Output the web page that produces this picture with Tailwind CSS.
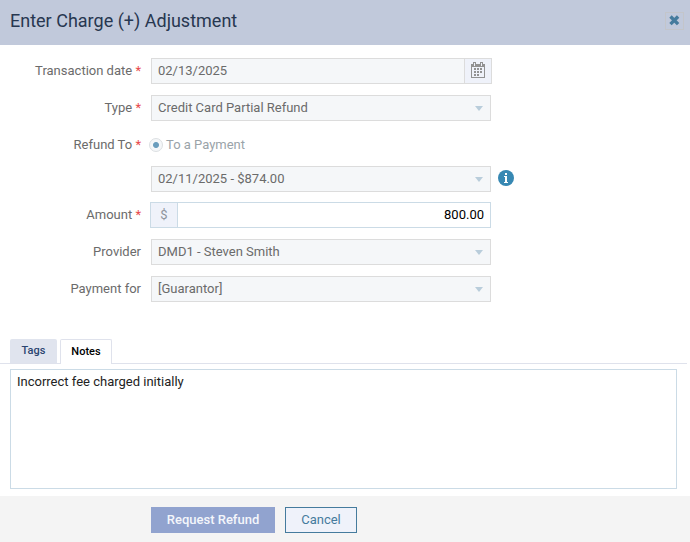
<!DOCTYPE html>
<html lang="en">

<head>
  <meta charset="UTF-8">
  <meta name="viewport" content="width=device-width, initial-scale=1.0">
  <title>Enter Charge (+) Adjustment</title>
  <script src="https://cdn.jsdelivr.net/npm/@tailwindcss/browser@4"></script>
</head>

<body class="bg-white font-[Roboto,sans-serif] text-[13px] text-[#6b6b6b]">
  <form class="flex min-h-screen flex-col">

    <!-- Header -->
    <header class="flex h-[45px] items-center justify-between bg-[#c1c9db] pl-[10px] pr-[6px]">
      <h1 class="pb-1 text-[18px] leading-6 text-[#273750]">Enter Charge (+) Adjustment</h1>
      <button type="button" aria-label="Close" class="mb-1 flex h-[18px] w-[19px] items-center justify-center border border-[#c3c5ca]">
        <svg class="size-[11px]" viewBox="0 0 11 11" fill="none" stroke="#457b9d" stroke-width="3.4">
          <path d="M1.5 1.5l7.6 7.6M9.1 1.5L1.5 9.1" />
        </svg>
      </button>
    </header>

    <!-- Fields -->
    <div class="grid grid-cols-[141px_minmax(0,1fr)] items-center gap-x-[10px] pt-[13px] pr-4">
      <label for="date" class="mb-[11px] text-right">Transaction date <span class="text-[#e84a4a]">*</span></label>
      <div class="mb-[11px] flex h-[26px] max-w-[341px] border border-[#dcdcdc] bg-[#f5f7f9]">
        <input id="date" type="text" value="02/13/2025" disabled class="min-w-0 flex-1 px-[6px] text-[#6b6b6b]">
        <button type="button" aria-label="Open calendar" disabled class="flex w-[27px] items-start justify-center border-l border-[#dcdcdc] bg-[#eff2fa] pt-[3px]">
          <svg class="h-4 w-[14px]" viewBox="0 0 14 16" fill="#929292" shape-rendering="crispEdges">
            <path fill-rule="evenodd" d="M0 2h2V0h3v2h4V0h3v2h2v14H0zM1 5v10h12V5zM3 1v3h1V1zM10 1v3h1V1z" />
            <path d="M3 6h2v2H3zM6 6h2v2H6zM9 6h2v2H9zM3 9h2v2H3zM6 9h2v2H6zM9 9h2v2H9zM3 12h2v2H3zM6 12h2v2H6z" />
          </svg>
        </button>
      </div>

      <label for="type" class="mb-[11px] text-right">Type <span class="text-[#e84a4a]">*</span></label>
      <div class="relative mb-[11px] max-w-[340px]">
        <select id="type" disabled class="block h-[26px] w-full appearance-none border border-[#dcdcdc] bg-[#f5f7f9] px-[6px] text-[#6b6b6b] opacity-100">
          <option>Credit Card Partial Refund</option>
        </select>
        <svg class="absolute top-[11px] right-2 h-[5px] w-2" viewBox="0 0 8 5" fill="#b9cddb"><path d="M0 0h8L4 5z" /></svg>
      </div>

      <span class="mb-2 text-right">Refund To <span class="text-[#e84a4a]">*</span></span>
      <div class="mb-2 flex h-[26px] items-center gap-[3px] text-[#9aa3a9]">
        <input id="to-payment" type="radio" name="refund-to" checked disabled class="-ml-[2px] size-[14px] appearance-none rounded-full border border-[#dcdfe2] bg-[radial-gradient(circle,#6a9dbd_2.5px,#f5f7f9_3.5px)]">
        <label for="to-payment">To a Payment</label>
      </div>

      <div class="col-start-2 mb-[10px] flex items-center gap-[7px]">
        <div class="relative w-[340px]">
          <select aria-label="Payment" disabled class="block h-[26px] w-full appearance-none border border-[#dcdcdc] bg-[#f5f7f9] px-[6px] text-[#6b6b6b] opacity-100">
            <option>02/11/2025 - $874.00</option>
          </select>
          <svg class="absolute top-[11px] right-2 h-[5px] w-2" viewBox="0 0 8 5" fill="#b9cddb"><path d="M0 0h8L4 5z" /></svg>
        </div>
        <button type="button" aria-label="Payment info" class="mb-[2px]">
          <svg class="size-4" viewBox="0 0 16 16">
            <circle cx="8" cy="8" r="8" fill="#3788b3" />
            <path d="M7 3h2v2H7zM6 6h3v6h1v1H6v-1h1V7H6z" fill="#fff" />
          </svg>
        </button>
      </div>

      <label for="amount" class="mb-[11px] text-right">Amount <span class="text-[#e84a4a]">*</span></label>
      <div class="-ml-px mb-[11px] flex h-[26px] max-w-[341px] border border-[#cbdbe6]">
        <span class="flex w-[27px] items-center justify-center border-r border-[#cbdbe6] bg-[#eff2fa] text-[#8e949c]">$</span>
        <input id="amount" type="text" value="800.00" class="min-w-0 flex-1 bg-white px-[6px] text-right text-black">
      </div>

      <label for="provider" class="mb-[11px] text-right">Provider</label>
      <div class="relative mb-[11px] max-w-[340px]">
        <select id="provider" disabled class="block h-[26px] w-full appearance-none border border-[#dcdcdc] bg-[#f5f7f9] px-[6px] text-[#6b6b6b] opacity-100">
          <option>DMD1 - Steven Smith</option>
        </select>
        <svg class="absolute top-[11px] right-2 h-[5px] w-2" viewBox="0 0 8 5" fill="#b9cddb"><path d="M0 0h8L4 5z" /></svg>
      </div>

      <label for="payment-for" class="text-right">Payment for</label>
      <div class="relative max-w-[340px]">
        <select id="payment-for" disabled class="block h-[26px] w-full appearance-none border border-[#dcdcdc] bg-[#f5f7f9] px-[6px] text-[#6b6b6b] opacity-100">
          <option>[Guarantor]</option>
        </select>
        <svg class="absolute top-[11px] right-2 h-[5px] w-2" viewBox="0 0 8 5" fill="#b9cddb"><path d="M0 0h8L4 5z" /></svg>
      </div>
    </div>

    <!-- Tabs -->
    <div role="tablist" class="mt-[37px] mr-[3px] flex gap-[3px] border-b border-[#dfe2ec] pl-[10px] text-[11px] font-medium">
      <button type="button" role="tab" class="h-6 w-[47px] rounded-t-xs bg-[#e0e4ee] text-[#2b4570]">Tags</button>
      <button type="button" role="tab" aria-selected="true" class="-mb-px h-[25px] w-[52px] rounded-t-xs border border-b-0 border-[#dfe2ec] bg-white text-black">Notes</button>
    </div>
    <div class="mt-[5px] mb-[7px] mr-[13px] ml-[10px] flex flex-1">
      <textarea aria-label="Notes" class="block min-h-[120px] w-full resize-none border border-[#cbdbe6] px-[6px] py-1 leading-4 text-[#222]">Incorrect fee charged initially</textarea>
    </div>

    <!-- Actions -->
    <footer class="flex gap-[10px] bg-[#f4f4f4] pt-[11px] pb-[9px] pl-[151px]">
      <button type="submit" disabled class="h-[26px] w-[124px] bg-[#91a3cf] font-medium text-[#f4f6fb]">Request Refund</button>
      <button type="button" class="h-[26px] w-[72px] border border-[#457b9d] bg-[#eff2fa] text-[#457b9d]">Cancel</button>
    </footer>
  </form>
</body>

</html>
